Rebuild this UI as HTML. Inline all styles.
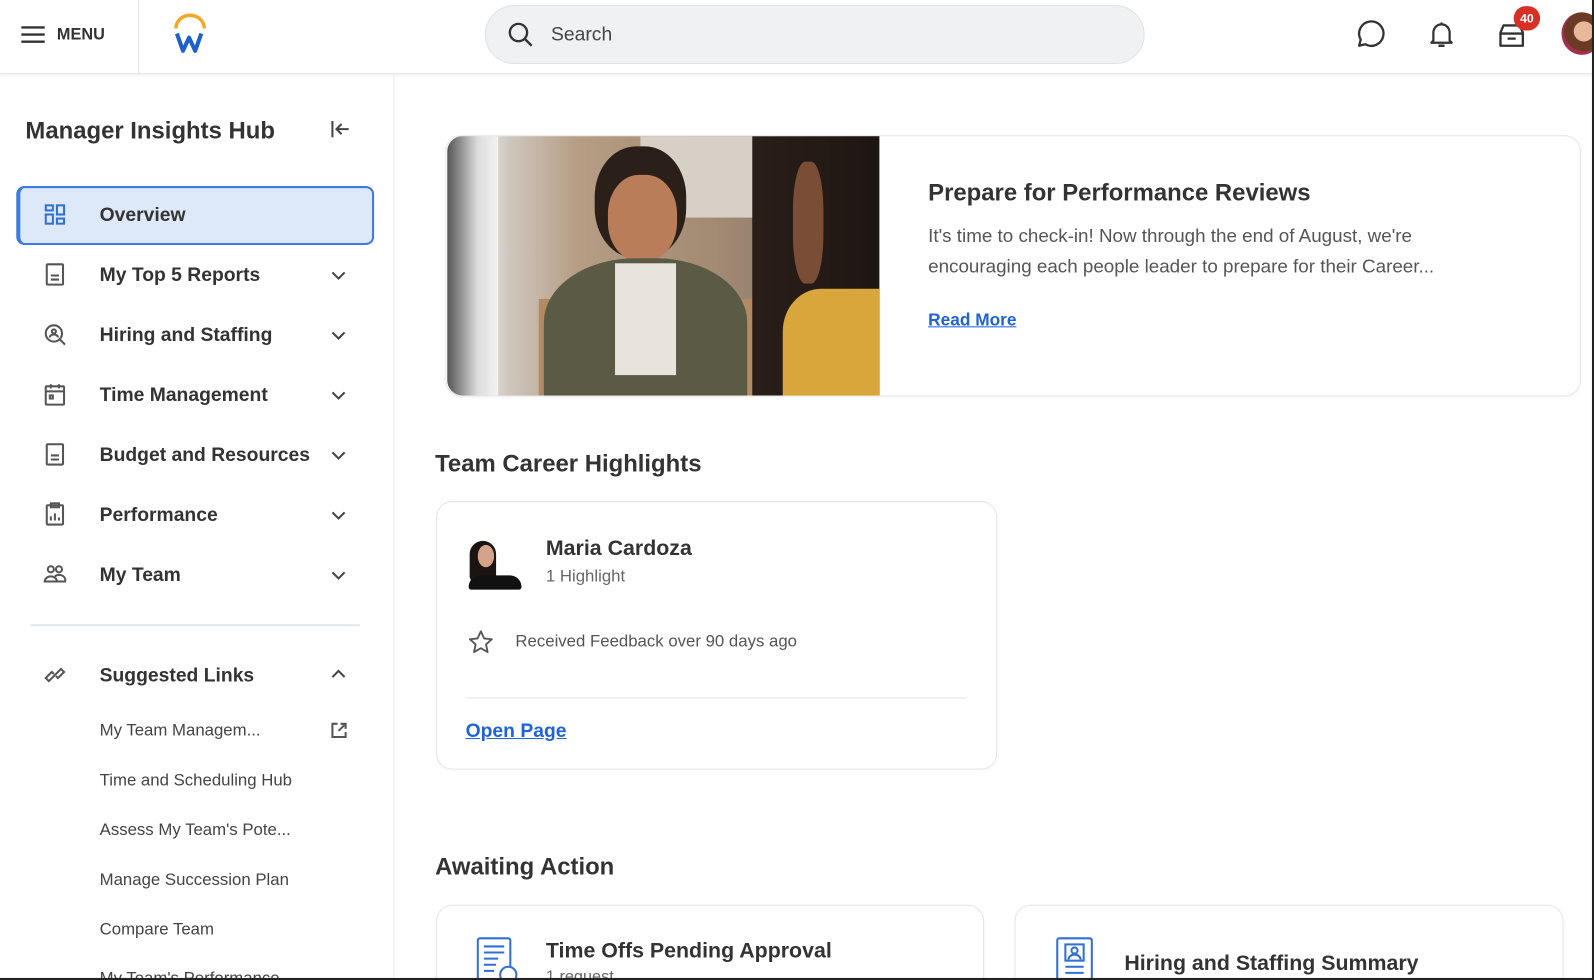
<!DOCTYPE html>
<html><head><meta charset="utf-8"><style>
*{box-sizing:border-box;margin:0;padding:0}
html,body{width:1594px;height:980px;overflow:hidden}
body{background:#fff;font-family:"Liberation Sans",sans-serif;color:#333;position:relative}
#w{position:absolute;left:0;top:0;width:1568px;height:964px;overflow:hidden;transform:scale(1.01658);transform-origin:0 0}
.a{position:absolute}
.hdr{left:0;top:0;width:1568px;height:73px;border-bottom:1px solid #e3e3e3;box-shadow:0 2px 3px rgba(0,0,0,.05);background:#fff}
.side{left:0;top:74px;width:388px;height:900px;border-right:1px solid #e8e8e8}
.it{position:absolute;left:98px;font-size:19px;font-weight:bold;color:#333;transform:translateY(-48%)}
.ic{position:absolute;left:42px;width:24px;height:24px;transform:translateY(-50%)}
.ch{position:absolute;left:324px;width:18px;height:18px;transform:translateY(-50%)}
.sl{position:absolute;left:98px;font-size:16.5px;color:#444;transform:translateY(-45%)}
.card{border:1px solid #e6e6e6;border-radius:16px;background:#fff;box-shadow:0 1px 3px rgba(0,0,0,.04)}
h2{position:absolute;font-size:23.5px;font-weight:bold;color:#333;transform:translateY(-48%)}
</style></head><body><div id="w">
<div class="a hdr"></div>
<svg class="a" style="left:20px;top:25px" width="25" height="18" viewBox="0 0 25 18"><path d="M1 2h23M1 9h23M1 16h23" stroke="#333" stroke-width="2.4"/></svg>
<div class="a" style="left:56px;top:26px;font-size:16px;font-weight:bold;color:#333">MENU</div>
<div class="a" style="left:136px;top:0;width:1px;height:73px;background:#e3e3e3"></div>
<svg class="a" style="left:168px;top:13px" width="38" height="40" viewBox="0 0 38 40"><path d="M5 15A14 13 0 0 1 33 15" fill="none" stroke="#f5a623" stroke-width="3.4"/><path d="M6 20l6 17 6-13 6 13 6-17" fill="none" stroke="#1f5fc9" stroke-width="4" stroke-linejoin="round"/></svg>
<div class="a" style="left:477px;top:5px;width:649px;height:58px;border-radius:29px;background:#f0f1f2;border:1px solid #e2e2e2"></div>
<svg class="a" style="left:499px;top:21px" width="27" height="27" viewBox="0 0 27 27"><circle cx="11" cy="11" r="8.5" fill="none" stroke="#333" stroke-width="2.3"/><path d="M17 17l7 7" stroke="#333" stroke-width="2.4"/></svg>
<div class="a" style="left:542px;top:24px;font-size:19px;color:#444">Search</div>
<svg class="a" style="left:1332px;top:18px" width="32" height="32" viewBox="0 0 32 32"><path d="M5 27l1.5-6A12 12 0 1 1 11 25.5z" fill="none" stroke="#333" stroke-width="2.3" stroke-linejoin="round"/></svg>
<svg class="a" style="left:1404px;top:19px" width="28" height="30" viewBox="0 0 28 30"><path d="M6 21V13a8 8 0 0 1 16 0v8l2 2H4z" fill="none" stroke="#333" stroke-width="2.2" stroke-linejoin="round"/><path d="M11 26h6" stroke="#333" stroke-width="2.4"/><path d="M14 3v2" stroke="#333" stroke-width="2"/></svg>
<svg class="a" style="left:1472px;top:22px" width="30" height="26" viewBox="0 0 30 26"><path d="M4 10l3-7h16l3 7v13H4z" fill="none" stroke="#333" stroke-width="2.3" stroke-linejoin="round"/><path d="M4 11h22M11 16h8" stroke="#333" stroke-width="2.3"/></svg>
<div class="a" style="left:1489px;top:6px;width:26px;height:24px;border-radius:12px;background:#d93025;color:#fff;font-size:12px;font-weight:bold;text-align:center;line-height:24px">40</div>
<div class="a" style="left:1536px;top:12px;width:40px;height:42px;border-radius:50%;background:radial-gradient(circle at 55% 45%,#e8b89c 0 30%,#6b3a25 32% 60%,#a33050 62%)"></div>

<div class="a side"></div>
<div class="a" style="left:25px;top:115px;font-size:23.5px;font-weight:bold;color:#333">Manager Insights Hub</div>
<svg class="a" style="left:324px;top:117px" width="22" height="20" viewBox="0 0 22 20"><path d="M3 2v16M19 10H8M12 5l-5 5 5 5" fill="none" stroke="#444" stroke-width="2"/></svg>
<div class="a" style="left:16px;top:183px;width:352px;height:58px;border-radius:8px;background:#dde8f8;border:2px solid #3c7be0;border-left-width:4px"></div>
<svg class="ic" style="top:211px" viewBox="0 0 24 24"><g fill="none" stroke="#2f6fd6" stroke-width="2"><rect x="3" y="3" width="7" height="5"/><rect x="3" y="12" width="7" height="9"/><rect x="14" y="3" width="7" height="9"/><rect x="14" y="16" width="7" height="5"/></g></svg>
<div class="it" style="top:212px">Overview</div>

<svg class="ic" style="top:270px" viewBox="0 0 24 24"><g fill="none" stroke="#555" stroke-width="2"><rect x="4" y="2" width="16" height="20" rx="1"/><path d="M8 13h8M8 17h8"/></g></svg>
<div class="it" style="top:271px">My Top 5 Reports</div>
<svg class="ic" style="top:329px" viewBox="0 0 24 24"><g fill="none" stroke="#555" stroke-width="2"><circle cx="11" cy="11" r="8"/><path d="M17 17l5 5"/><circle cx="11" cy="9" r="2"/><path d="M7 15a4 3 0 0 1 8 0"/></g></svg>
<div class="it" style="top:330px">Hiring and Staffing</div>
<svg class="ic" style="top:388px" viewBox="0 0 24 24"><g fill="none" stroke="#555" stroke-width="2"><rect x="3" y="4" width="18" height="18" rx="1"/><path d="M3 9h18M8 2v4M16 2v4"/><rect x="7" y="13" width="3" height="3"/></g></svg>
<div class="it" style="top:389px">Time Management</div>
<svg class="ic" style="top:447px" viewBox="0 0 24 24"><g fill="none" stroke="#555" stroke-width="2"><rect x="4" y="2" width="16" height="20" rx="1"/><path d="M8 13h8M8 17h8"/></g></svg>
<div class="it" style="top:448px">Budget and Resources</div>
<svg class="ic" style="top:506px" viewBox="0 0 24 24"><g fill="none" stroke="#555" stroke-width="2"><rect x="4" y="3" width="16" height="19" rx="1"/><rect x="8" y="1" width="8" height="4"/><path d="M8 18v-4M12 18v-7M16 18v-3"/></g></svg>
<div class="it" style="top:507px">Performance</div>
<svg class="ic" style="top:565px" viewBox="0 0 24 24"><g fill="none" stroke="#555" stroke-width="2"><circle cx="8" cy="7" r="3"/><circle cx="16" cy="7" r="3"/><path d="M2 19a6 5 0 0 1 12 0zM12 14a6 5 0 0 1 10 5h-8"/></g></svg>
<div class="it" style="top:566px">My Team</div>
<svg class="ch" style="top:271px" viewBox="0 0 18 18"><path d="M3 6l6 6 6-6" fill="none" stroke="#444" stroke-width="2"/></svg>
<svg class="ch" style="top:330px" viewBox="0 0 18 18"><path d="M3 6l6 6 6-6" fill="none" stroke="#444" stroke-width="2"/></svg>
<svg class="ch" style="top:389px" viewBox="0 0 18 18"><path d="M3 6l6 6 6-6" fill="none" stroke="#444" stroke-width="2"/></svg>
<svg class="ch" style="top:448px" viewBox="0 0 18 18"><path d="M3 6l6 6 6-6" fill="none" stroke="#444" stroke-width="2"/></svg>
<svg class="ch" style="top:507px" viewBox="0 0 18 18"><path d="M3 6l6 6 6-6" fill="none" stroke="#444" stroke-width="2"/></svg>
<svg class="ch" style="top:566px" viewBox="0 0 18 18"><path d="M3 6l6 6 6-6" fill="none" stroke="#444" stroke-width="2"/></svg>
<div class="a" style="left:30px;top:614px;width:324px;height:2px;background:#e4e6ea"></div>
<svg class="ic" style="top:664px" viewBox="0 0 24 24"><g fill="none" stroke="#555" stroke-width="2"><path d="M10 14l-4 4-3-3 6-6 2 2M14 10l4-4 3 3-6 6-2-2M9 15l6-6"/></g></svg>
<div class="it" style="top:665px">Suggested Links</div>
<svg class="ch" style="top:663px" viewBox="0 0 18 18"><path d="M3 12l6-6 6 6" fill="none" stroke="#444" stroke-width="2"/></svg>
<div class="sl" style="top:718px">My Team Managem...</div>
<svg class="a" style="left:325px;top:710px" width="17" height="17" viewBox="0 0 17 17"><path d="M7 2H2v13h13v-5M10 2h5v5M15 2L8 9" fill="none" stroke="#555" stroke-width="2"/></svg>
<div class="sl" style="top:767px">Time and Scheduling Hub</div>
<div class="sl" style="top:816px">Assess My Team's Pote...</div>
<div class="sl" style="top:865px">Manage Succession Plan</div>
<div class="sl" style="top:914px">Compare Team</div>
<div class="sl" style="top:962px">My Team's Performance</div>

<div class="a card" style="left:438px;top:133px;width:1117px;height:257px"></div>
<div class="a" style="left:440px;top:134px;width:425px;height:255px;border-radius:15px 0 0 15px;overflow:hidden;background:linear-gradient(90deg,#7d6a5e 0%,#e8e6e4 8%,#cfc8c0 14%,#b69d84 30%,#a48c74 60%,#8f7c6c 80%,#4a3b33 100%)">
 <div class="a" style="left:0;top:0;width:50px;height:255px;background:linear-gradient(90deg,#555,#ddd 60%,#f3f3f3)"></div>
 <div class="a" style="left:190px;top:0;width:130px;height:80px;background:#d7d0c6"></div>
 <div class="a" style="left:90px;top:160px;width:230px;height:95px;background:#b28a63"></div>
 <div class="a" style="left:145px;top:10px;width:90px;height:110px;border-radius:45%;background:#2b1f1a"></div>
 <div class="a" style="left:158px;top:38px;width:68px;height:85px;border-radius:45%;background:#b97d5a"></div>
 <div class="a" style="left:95px;top:120px;width:200px;height:140px;border-radius:45% 45% 0 0;background:#5b5a45"></div>
 <div class="a" style="left:165px;top:125px;width:60px;height:110px;background:#e8e4dc"></div>
 <div class="a" style="left:300px;top:0;width:125px;height:255px;background:linear-gradient(90deg,#2a1e19,#1e1613)"></div>
 <div class="a" style="left:330px;top:150px;width:95px;height:105px;border-radius:40% 0 0 0;background:#d9a63b"></div>
 <div class="a" style="left:340px;top:25px;width:30px;height:120px;border-radius:40%;background:#7a4d36"></div>
</div>
<div class="a" style="left:913px;top:176px;font-size:23.5px;font-weight:bold;color:#333">Prepare for Performance Reviews</div>
<div class="a" style="left:913px;top:217px;font-size:18.5px;color:#555;line-height:29.5px">It's time to check-in! Now through the end of August, we're<br>encouraging each people leader to prepare for their Career...</div>
<div class="a" style="left:913px;top:305px;font-size:17px;font-weight:bold;color:#1f63d6;text-decoration:underline">Read More</div>

<h2 style="left:428px;top:456px">Team Career Highlights</h2>
<div class="a card" style="left:429px;top:493px;width:552px;height:264px"></div>
<div class="a" style="left:462px;top:532px;width:26px;height:40px;border-radius:13px 13px 5px 5px;background:#1c1412"></div>
<div class="a" style="left:470px;top:536px;width:16px;height:22px;border-radius:50%;background:#d4a48a"></div>
<div class="a" style="left:461px;top:566px;width:52px;height:14px;border-radius:26px 26px 6px 6px;background:#111"></div>
<div class="a" style="left:537px;top:528px;font-size:21px;font-weight:bold;color:#333">Maria Cardoza</div>
<div class="a" style="left:537px;top:558px;font-size:16.5px;color:#666">1 Highlight</div>
<svg class="a" style="left:460px;top:619px" width="26" height="25" viewBox="0 0 26 25"><path d="M13 2l3.2 7 7.6.8-5.7 5.1 1.6 7.5L13 18.6l-6.7 3.8 1.6-7.5L2.2 9.8 9.8 9z" fill="none" stroke="#555" stroke-width="1.8" stroke-linejoin="round"/></svg>
<div class="a" style="left:507px;top:622px;font-size:16.5px;color:#555">Received Feedback over 90 days ago</div>
<div class="a" style="left:458px;top:686px;width:493px;height:1px;background:#e3e3e3"></div>
<div class="a" style="left:458px;top:709px;font-size:19px;font-weight:bold;color:#1f63d6;text-decoration:underline">Open Page</div>

<h2 style="left:428px;top:852px">Awaiting Action</h2>
<div class="a card" style="left:429px;top:890px;width:539px;height:120px"></div>
<div class="a card" style="left:998px;top:890px;width:540px;height:120px"></div>
<svg class="a" style="left:468px;top:921px" width="44" height="44" viewBox="0 0 44 44"><g fill="none" stroke="#2f6fd6" stroke-width="2"><rect x="2" y="2" width="32" height="42" rx="2"/><path d="M8 10h20M8 16h20M8 22h14M8 28h12M8 34h10"/><circle cx="32" cy="38" r="8" fill="#fff"/></g></svg>
<div class="a" style="left:537px;top:924px;font-size:21px;font-weight:bold;color:#333">Time Offs Pending Approval</div>
<div class="a" style="left:537px;top:953px;font-size:16px;color:#666">1 request</div>
<svg class="a" style="left:1038px;top:921px" width="40" height="44" viewBox="0 0 40 44"><g fill="none" stroke="#2f6fd6" stroke-width="2"><rect x="2" y="2" width="34" height="42" rx="2"/><rect x="10" y="8" width="18" height="16"/><circle cx="19" cy="14" r="3"/><path d="M13 23a6 5 0 0 1 12 0M10 30h18M10 36h18"/></g></svg>
<div class="a" style="left:1106px;top:936px;font-size:21px;font-weight:bold;color:#333">Hiring and Staffing Summary</div>
<div class="a" style="left:0;top:962px;width:1568px;height:3px;background:#222"></div>
<div class="a" style="left:1566px;top:0;width:3px;height:965px;background:#222"></div>
</div></body></html>
